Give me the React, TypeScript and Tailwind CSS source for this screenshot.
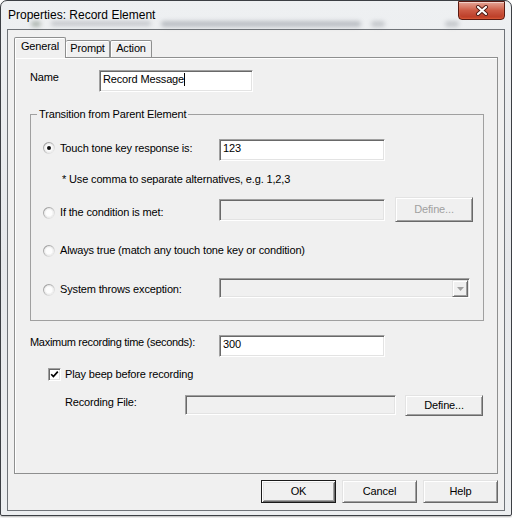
import React from "react";

const sunken =
  "border border-t-[#a0a0a0] border-l-[#a0a0a0] border-r-white border-b-white shadow-[inset_1px_1px_0_#696969,inset_-1px_-1px_0_#e3e3e3]";
const raised =
  "border border-t-[#e3e3e3] border-l-[#e3e3e3] border-r-[#696969] border-b-[#696969] shadow-[inset_1px_1px_0_#fff,inset_-1px_-1px_0_#a0a0a0]";

function Field({
  className = "",
  value = "",
  disabled = false,
  caret = false,
}: {
  className?: string;
  value?: string;
  disabled?: boolean;
  caret?: boolean;
}) {
  return (
    <div
      className={`${sunken} ${disabled ? "bg-[#f0f0f0]" : "bg-white"} pl-[3px] pt-[2px] leading-[13px] whitespace-nowrap ${className}`}
    >
      {value}
      {caret && <span className="inline-block w-px h-[13px] bg-black align-top" />}
    </div>
  );
}

function Btn({
  className = "",
  children,
  disabled = false,
  primary = false,
}: {
  className?: string;
  children: React.ReactNode;
  disabled?: boolean;
  primary?: boolean;
}) {
  const frame = primary
    ? "border border-[#1a1a1a] shadow-[inset_1px_1px_0_#fff,inset_-1px_-1px_0_#696969,inset_2px_2px_0_#e3e3e3,inset_-2px_-2px_0_#a0a0a0]"
    : raised;
  return (
    <div
      className={`${frame} bg-[#f0f0f0] flex items-center justify-center leading-[13px] ${disabled ? "text-[#a0a0a0]" : "text-black"} ${className}`}
    >
      {children}
    </div>
  );
}

function Radio({ checked = false, className = "" }: { checked?: boolean; className?: string }) {
  return (
    <svg width="12" height="12" viewBox="0 0 12 12" className={`shrink-0 ${className}`}>
      <defs>
        <linearGradient id={checked ? "rgOn" : "rgOff"} x1="0" y1="0" x2="1" y2="1">
          <stop offset="0" stopColor="#8d8d8d" />
          <stop offset="0.55" stopColor="#c9c9c9" />
          <stop offset="1" stopColor="#f4f4f4" />
        </linearGradient>
      </defs>
      <circle cx="6" cy="6" r="5.4" fill="#fdfdfd" stroke={`url(#${checked ? "rgOn" : "rgOff"})`} strokeWidth="1.1" />
      <circle cx="6" cy="6" r="4.2" fill="none" stroke="#e4e4e4" strokeWidth="0.8" />
      {checked && <circle cx="6" cy="6" r="2" fill="#111" />}
    </svg>
  );
}

function Check({ className = "" }: { className?: string }) {
  return (
    <div className={`w-[13px] h-[13px] ${sunken} bg-white flex items-center justify-center ${className}`}>
      <svg width="9" height="9" viewBox="0 0 9 9">
        <path d="M1.2 4.2 L3.4 6.6 L7.8 1.6" fill="none" stroke="#000" strokeWidth="1.7" />
      </svg>
    </div>
  );
}

export default function App() {
  return (
    <div className="w-[512px] h-[518px] bg-white overflow-hidden font-['Liberation_Sans',Arial,sans-serif] text-black">
      <div className="w-[512px] h-[516px] flex flex-col border border-[#3c3f44] rounded-t-[7px] rounded-b-[2px] bg-gradient-to-b from-[#eef0f2] via-[#e6e8eb] to-[#eceef0] px-[6px] pb-[4px] shadow-[0_1px_2px_rgba(0,0,0,0.3)]">
        {/* title bar, with the blurred glass showing through */}
        <div className="h-[28px] shrink-0 flex items-start justify-between relative">
          <div className="absolute left-[24px] top-[20px] flex gap-[10px] blur-[2px] opacity-40">
            <div className="w-[10px] h-[6px] rounded-full bg-[#5a6b5a]" />
            <div className="w-[100px] h-[5px] rounded-full bg-[#8a8f96]" />
            <div className="w-[200px] h-[6px] rounded-full bg-[#6f7680]" />
            <div className="w-[14px] h-[6px] rounded-full bg-[#8a8f96]" />
            <div className="w-[14px] h-[6px] rounded-full bg-[#8a8f96] ml-[50px]" />
          </div>
          <span className="relative ml-[1px] mt-[7px] text-[12px] leading-[15px] text-black">
            Properties: Record Element
          </span>
          <div className="relative w-[47px] h-[19px] rounded-b-[4px] border border-[#5a1a12] bg-gradient-to-b from-[#e3a597] via-[#cc5a44] to-[#b8341f] shadow-[inset_0_1px_0_rgba(255,255,255,0.5),inset_0_-1px_2px_rgba(255,140,90,0.5)] flex items-center justify-center">
            <svg width="14" height="11" viewBox="0 0 14 11">
              <path d="M3 2 L11 9 M11 2 L3 9" stroke="#4a1812" strokeWidth="4" strokeLinecap="round" />
              <path d="M3 2 L11 9 M11 2 L3 9" stroke="#ffffff" strokeWidth="2.2" strokeLinecap="round" />
            </svg>
          </div>
        </div>

        {/* client area */}
        <div className="flex-1 flex flex-col border border-[#6f7378] bg-[#f0f0f0] pt-[7px] px-[6px] pb-[7px] text-[11px] tracking-[-0.15px]">
          {/* tabs */}
          <div className="h-[20px] flex items-end shrink-0">
            <div className="relative z-10 w-[52px] h-[21px] -mb-px border border-b-0 border-[#8e8f8f] rounded-t-[2px] bg-[#f0f0f0] shadow-[inset_1px_1px_0_#fff] flex justify-center pt-[2px] leading-[13px]">
              General
            </div>
            <div className="w-[44px] h-[17px] border border-b-0 border-l-0 border-[#8e8f8f] rounded-t-[2px] bg-[#f0f0f0] shadow-[inset_1px_1px_0_#fff] flex justify-center pt-[1px] leading-[13px]">
              Prompt
            </div>
            <div className="w-[42px] h-[17px] border border-b-0 border-[#8e8f8f] rounded-t-[2px] bg-[#f0f0f0] shadow-[inset_1px_1px_0_#fff] flex justify-center pt-[1px] leading-[13px]">
              Action
            </div>
          </div>

          {/* tab panel */}
          <div className="h-[417px] shrink-0 border border-[#8e8f8f] bg-[#f0f0f0] shadow-[inset_1px_1px_0_#fff] pl-[15px] flex flex-col items-start">
            <div className="flex items-start mt-[12px]">
              <span className="w-[69px] mt-[1px] leading-[13px]">Name</span>
              <Field className="w-[154px] h-[22px]" value="Record Message" caret />
            </div>

            <fieldset className="w-[454px] mt-[16px] border border-[#a0a0a0] pb-[22px]">
              <legend className="ml-[6px] px-[2px] leading-[13px]">Transition from Parent Element</legend>

              <div className="flex items-start mt-[18px] ml-[12px]">
                <div className="w-[176px] flex items-start">
                  <Radio checked className="mt-[3px]" />
                  <span className="ml-[5px] mt-[3px] leading-[13px]">Touch tone key response is:</span>
                </div>
                <Field className="w-[166px] h-[22px]" value="123" />
              </div>

              <div className="ml-[31px] mt-[12px] leading-[13px]">
                * Use comma to separate alternatives, e.g. 1,2,3
              </div>

              <div className="flex items-start mt-[11px] ml-[12px]">
                <div className="w-[176px] flex items-start">
                  <Radio className="mt-[10px]" />
                  <span className="ml-[5px] mt-[9px] leading-[13px]">If the condition is met:</span>
                </div>
                <Field className="w-[166px] h-[22px] mt-[2px]" disabled />
                <Btn className="w-[78px] h-[25px] ml-[10px]" disabled>
                  Define...
                </Btn>
              </div>

              <div className="flex items-start mt-[22px] ml-[12px]">
                <Radio className="mt-[1px]" />
                <span className="ml-[5px] leading-[13px]">Always true (match any touch tone key or condition)</span>
              </div>

              <div className="flex items-start mt-[21px] ml-[12px]">
                <div className="w-[176px] flex items-start">
                  <Radio className="mt-[6px]" />
                  <span className="ml-[5px] mt-[5px] leading-[13px]">System throws exception:</span>
                </div>
                <div className={`${sunken} w-[251px] h-[20px] bg-[#f0f0f0] flex justify-end items-start pt-[1px] pr-[1px]`}>
                  <div className={`${raised} w-[16px] h-[17px] bg-[#f0f0f0] flex items-center justify-center`}>
                    <svg width="7" height="4" viewBox="0 0 7 4">
                      <path d="M0 0 H7 L3.5 4 Z" fill="#a0a0a0" />
                    </svg>
                  </div>
                </div>
              </div>
            </fieldset>

            <div className="flex items-start mt-[14px]">
              <span className="w-[189px] mt-[1px] leading-[13px] tracking-[-0.3px]">Maximum recording time (seconds):</span>
              <Field className="w-[166px] h-[22px]" value="300" />
            </div>

            <div className="flex items-start mt-[11px] ml-[18px]">
              <Check />
              <span className="ml-[4px] leading-[13px]">Play beep before recording</span>
            </div>

            <div className="flex items-start mt-[14px] ml-[35px]">
              <span className="w-[120px] mt-[1px] leading-[13px]">Recording File:</span>
              <Field className="w-[211px] h-[20px]" disabled />
              <Btn className="w-[78px] h-[21px] ml-[9px]">Define...</Btn>
            </div>
          </div>

          {/* dialog buttons */}
          <div className="flex justify-end gap-[6px] mt-[6px]">
            <Btn primary className="w-[75px] h-[23px]">
              OK
            </Btn>
            <Btn className="w-[75px] h-[23px]">Cancel</Btn>
            <Btn className="w-[75px] h-[23px]">Help</Btn>
          </div>
        </div>
      </div>
    </div>
  );
}
